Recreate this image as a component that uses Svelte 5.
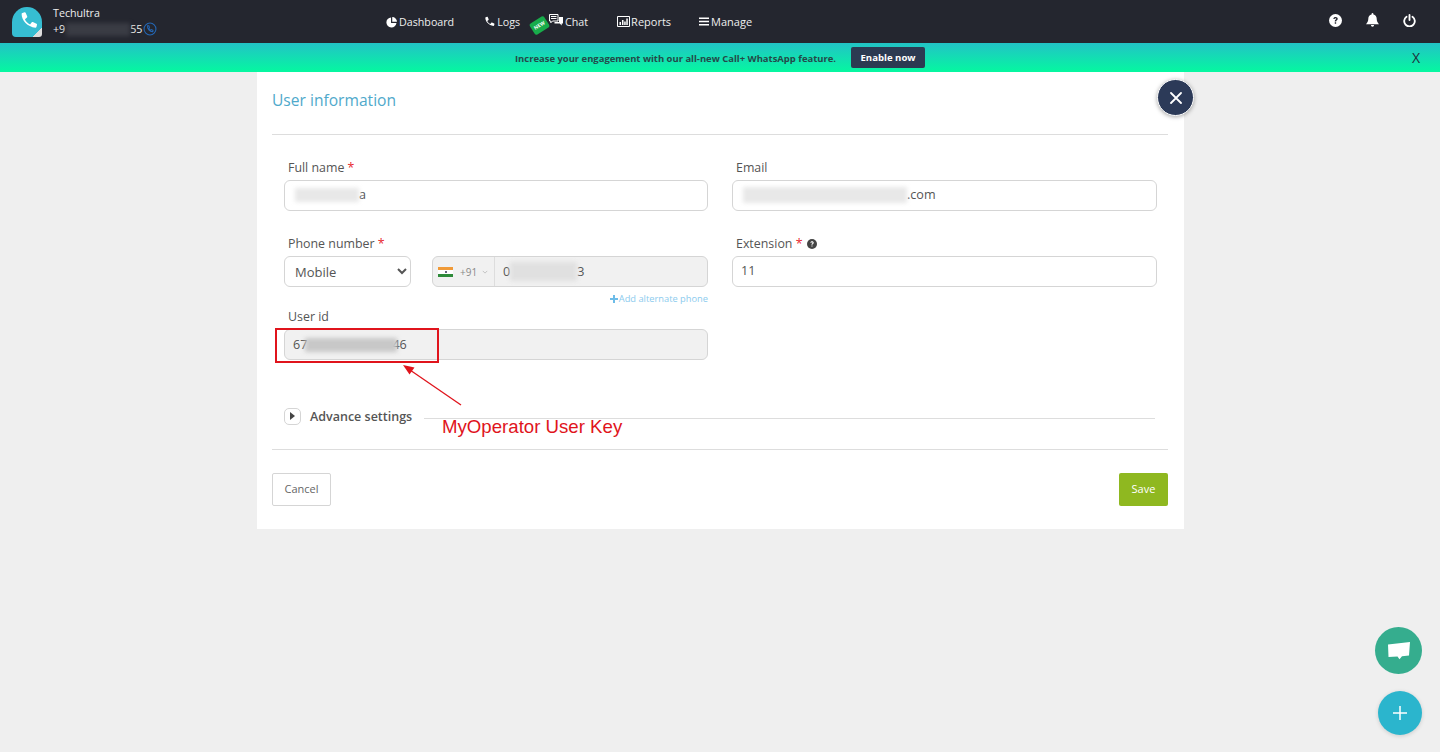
<script lang="ts">
	const navItems = [
		{ label: 'Dashboard', icon: 'pie' },
		{ label: 'Logs', icon: 'phone' },
		{ label: 'Chat', icon: 'chat' },
		{ label: 'Reports', icon: 'chart' },
		{ label: 'Manage', icon: 'bars' }
	];
	const phonePath =
		'M5.2 1.6 7 1.1c.4-.1.7.1.9.4l1.3 3c.1.3 0 .7-.2.9L7.3 6.8c.8 1.9 2.3 3.4 4.2 4.2l1.4-1.7c.2-.3.6-.3.9-.2l3 1.3c.3.2.5.5.4.9l-.5 1.8c-.1.4-.4.6-.8.6C9.400 12.700 4.600 7.900 4.600 2.400c0-.4.2-.7.6-.8z';
</script>

<header class="topbar">
	<div class="account">
		<span class="logo">
			<svg viewBox="0 0 18 18" width="22" height="22"><path d={phonePath} fill="#fff" /></svg>
		</span>
		<div class="account-text">
			<span>Techultra</span>
			<span class="account-number">
				+9<i class="redact dark"></i>55
				<svg viewBox="0 0 16 16" width="14" height="14" fill="none" stroke="#2467b5" stroke-width="1.2">
					<circle cx="8" cy="8" r="6.8" />
					<path d="M5.200 4.200c-.6 3.300 2.600 7 6 6.800l.2-1.500-2-.8-.9.9c-.9-.4-1.600-1.200-2-2.100l.9-.9-.7-2.400z" />
				</svg>
			</span>
		</div>
	</div>

	<nav class="nav">
		{#each navItems as item}
			<a class="nav-item" class:chat={item.icon === 'chat'} href="#top">
				{#if item.icon === 'pie'}
					<svg viewBox="0 0 12 12" width="11" height="11"><path d="M5.500.500v6h5.900A5.500 5.500 0 1 1 5.500.500zM6.800 0A5.300 5.300 0 0 1 12 5.200H6.800z" fill="#fff" /></svg>
				{:else if item.icon === 'phone'}
					<svg viewBox="0 0 18 18" width="13" height="13"><path d={phonePath} fill="#fff" /></svg>
				{:else if item.icon === 'chat'}
					<span class="new-tag">NEW</span>
					<svg class="chat-icon" viewBox="0 0 14 13" width="14" height="13">
						<path d="M.500.500h8.500v6.500H3.500L1.800 8.800V7H.500z" fill="#24262f" stroke="#fff" />
						<path d="M2 2.500h5.500M2 4.500h5.500" stroke="#fff" />
						<path d="M10 3h4v6.500h-1.300v2L10.800 9.500H5.500V8H10z" fill="#fff" />
					</svg>
				{:else if item.icon === 'chart'}
					<svg viewBox="0 0 13 11" width="13" height="11">
						<path d="M.500.500h12v10H.500z" fill="none" stroke="#fff" />
						<path d="M2.500 6h1.500v3H2.500zM5 4h1.500v5H5zM7.200 5.500h1.500V9H7.200zM9.300 2.500h1.500V9H9.300z" fill="#fff" />
					</svg>
				{:else}
					<svg viewBox="0 0 10 9" width="10" height="9"><path d="M0 .500h10v1.400H0zM0 3.800h10v1.400H0zM0 7.100h10v1.400H0z" fill="#fff" /></svg>
				{/if}
				{item.label}
			</a>
		{/each}
	</nav>

	<div class="top-actions">
		<svg viewBox="0 0 14 14" width="13" height="13">
			<circle cx="7" cy="7" r="7" fill="#fff" />
			<path d="M4.700 5.300C4.800 3.900 5.800 3.200 7.100 3.200c1.300 0 2.300.8 2.300 2 0 1.700-1.700 1.600-1.700 2.900H6.200c0-2 1.600-2 1.600-2.900 0-.4-.3-.7-.8-.7-.6 0-.9.400-1 .8zM6.200 9h1.500v1.500H6.200z" fill="#24262f" />
		</svg>
		<svg viewBox="0 0 14 15" width="13" height="14"><path d="M7 0c.6 0 1 .4 1 1v.5c2.300.4 3.500 2.300 3.500 4.500 0 3 1 4.500 2.500 6H0c1.500-1.500 2.500-3 2.500-6 0-2.200 1.200-4.100 3.500-4.500V1c0-.6.400-1 1-1zM5.300 13h3.400a1.700 1.700 0 0 1-3.400 0z" fill="#fff" /></svg>
		<svg viewBox="0 0 14 14" width="13" height="13" fill="none" stroke="#fff" stroke-width="2" stroke-linecap="round">
			<path d="M7 1v5.500" />
			<path d="M3.800 3A5.700 5.700 0 1 0 10.200 3" />
		</svg>
	</div>
</header>

<div class="banner">
	<div class="banner-center">
		<strong>Increase your engagement with our all-new Call+ WhatsApp feature.</strong>
		<button class="enable">Enable now</button>
	</div>
	<span class="banner-close">X</span>
</div>

<main class="page">
	<section class="card">
		<button class="close-round" aria-label="Close">
			<svg viewBox="0 0 12 12" width="12" height="12" stroke="#fff" stroke-width="1.800" stroke-linecap="round"><path d="M1 1l10 10M11 1 1 11" /></svg>
		</button>

		<h1>User information</h1>

		<div class="form">
			<div class="form-col">
				<label for="name">Full name <b>*</b></label>
				<div class="field" id="name"><i class="redact name-blur"></i>a</div>
			</div>
			<div class="form-col">
				<label for="email">Email</label>
				<div class="field" id="email"><i class="redact email-blur"></i>.com</div>
			</div>

			<div class="form-col">
				<label for="phone">Phone number <b>*</b></label>
				<div class="phone-row">
					<select class="field type-select">
						<option>Mobile</option>
					</select>
					<div class="field phone-field" id="phone">
						<span class="dial">
							<span class="flag"><i></i></span>
							+91
							<svg viewBox="0 0 8 5" width="6" height="4" fill="none" stroke="#b4b4b4"><path d="m1 1 3 3 3-3" /></svg>
						</span>
						<span class="phone-number">0<i class="redact phone-blur"></i>3</span>
					</div>
				</div>
				<div class="alt-phone">
					<svg viewBox="0 0 8 8" width="8" height="8"><path d="M3 0h2v3h3v2H5v3H3V5H0V3h3z" fill="#6dbce8" /></svg>
					Add alternate phone
				</div>
			</div>
			<div class="form-col">
				<label for="ext">Extension <b>*</b>
					<svg class="hint" viewBox="0 0 14 14" width="10" height="10">
						<circle cx="7" cy="7" r="7" fill="#444" />
						<path d="M4.700 5.300C4.800 3.900 5.800 3.200 7.100 3.200c1.300 0 2.300.8 2.300 2 0 1.700-1.700 1.600-1.700 2.900H6.200c0-2 1.600-2 1.600-2.900 0-.4-.3-.7-.8-.7-.6 0-.9.400-1 .8zM6.200 9h1.500v1.500H6.200z" fill="#fff" />
					</svg>
				</label>
				<div class="field ext-field" id="ext">11</div>
			</div>

			<div class="form-col user-id">
				<label for="uid">User id</label>
				<div class="field disabled" id="uid">67<i class="redact uid-blur"></i>46</div>
				<div class="red-box"></div>
			</div>
		</div>

		<div class="advanced">
			<span class="toggle"><svg viewBox="0 0 5 8" width="5" height="8"><path d="M0 0l5 4-5 4z" fill="#444" /></svg></span>
			<strong>Advance settings</strong>
			<span class="advanced-line"></span>
			<svg class="arrow" viewBox="0 0 62 44" width="62" height="44">
				<path d="M59 40 8 5" stroke="#e0141c" stroke-width="1.300" fill="none" />
				<path d="M1 0l11.500 2.500-5 7z" fill="#e0141c" />
			</svg>
			<span class="annotation">MyOperator User Key</span>
		</div>

		<footer class="actions">
			<button class="cancel">Cancel</button>
			<button class="save">Save</button>
		</footer>
	</section>
</main>

<button class="fab chat-fab" aria-label="Chat">
	<svg viewBox="0 0 24 20" width="24" height="20"><path d="M1 3.500 23 1l-1 13.500-7 .8-2.500 3-2-2.700-9 .4z" fill="#fff" /></svg>
</button>
<button class="fab add-fab" aria-label="Add">
	<svg viewBox="0 0 14 14" width="14" height="14" stroke="#fff" stroke-width="1.500"><path d="M7 0v14M0 7h14" /></svg>
</button>

<style>
	:global(body) {
		background: #efefef;
		font-family: 'Open Sans', sans-serif;
		color: #555;
		height: 752px;
		overflow: hidden;
	}

	.topbar {
		height: 43px;
		display: flex;
		align-items: center;
		background: #24262f;
		color: #eee;
		font-size: 10.7px;
		position: relative;
	}

	.account {
		display: flex;
		align-items: center;
		gap: 11px;
		padding-left: 12px;
	}

	.logo {
		width: 30px;
		height: 30px;
		display: flex;
		align-items: center;
		justify-content: center;
		background: linear-gradient(135deg, #36bdd2 85%, #ddd 85%);
		border-radius: 50% 50% 3px 4px;
		margin-top: 1px;
	}

	.account-text {
		display: flex;
		flex-direction: column;
		line-height: 16px;
		margin-top: -1px;
	}

	.account-number {
		display: flex;
		align-items: center;
	}

	.account-number svg {
		margin-left: 1px;
	}

	.redact {
		display: inline-block;
		filter: blur(2px);
	}

	.redact.dark {
		width: 64px;
		height: 13px;
		background: #3a3c44;
		margin-left: 1px;
	}

	.nav {
		position: absolute;
		left: 386px;
		top: 0;
		height: 44px;
		display: flex;
		align-items: center;
	}

	.nav-item {
		display: flex;
		align-items: center;
		gap: 2px;
		color: #eee;
		text-decoration: none;
		margin-right: 28px;
		position: relative;
	}

	.nav-item:nth-child(2),
	.nav-item:nth-child(3) {
		margin-right: 29px;
	}

	.nav-item:nth-child(4) {
		gap: 1px;
		font-size: 11px;
		margin-top: -1px;
	}

	.nav-item:nth-child(5) {
		font-size: 11px;
		margin-top: -1px;
	}

	.chat-icon {
		margin-top: -3px;
	}

	.new-tag {
		position: absolute;
		left: -18px;
		top: 4px;
		width: 17px;
		height: 13px;
		background: #18ac4b;
		border-radius: 2px;
		color: #fff;
		font-size: 5px;
		font-weight: 700;
		line-height: 13px;
		text-align: center;
		transform: rotate(-32deg);
	}

	.top-actions {
		margin-left: auto;
		display: flex;
		align-items: center;
		gap: 24px;
		padding-right: 24px;
		margin-top: -3px;
	}

	.banner {
		height: 29px;
		background: linear-gradient(180deg, #22c3c6 0%, #05f8a0 100%);
		display: flex;
		align-items: center;
		justify-content: center;
		position: relative;
		color: #24494a;
		font-size: 9.45px;
	}

	.banner-center {
		display: flex;
		align-items: center;
		gap: 15px;
	}

	.banner-center strong {
		font-weight: 700;
		margin-top: 1px;
	}

	.enable {
		width: 74px;
		height: 21px;
		padding: 0;
		border: none;
		border-radius: 2px;
		background: #2c3a52;
		color: #fff;
		font: 700 9.6px 'Open Sans', sans-serif;
	}

	.banner-close {
		position: absolute;
		right: 20px;
		top: 5px;
		color: #1f2e3a;
		font-size: 14px;
	}

	.page {
		display: flex;
		justify-content: center;
		padding-left: 1px;
	}

	.card {
		position: relative;
		width: 896px;
		height: 457px;
		padding: 0 16px 0 15px;
		background: #fff;
	}

	.close-round {
		position: absolute;
		right: -10px;
		top: 7px;
		width: 37px;
		height: 37px;
		padding: 0;
		display: flex;
		align-items: center;
		justify-content: center;
		border: 1px solid #fff;
		border-radius: 50%;
		background: #2c3a58;
		box-shadow: 0 1px 4px rgba(0, 0, 0, 0.35);
	}

	h1 {
		margin: 0;
		height: 62px;
		line-height: 56px;
		border-bottom: 1px solid #ddd;
		color: #4fa9cb;
		font-size: 15.6px;
		font-weight: 400;
	}

	.form {
		display: grid;
		grid-template-columns: 424px 425px;
		column-gap: 24px;
		padding: 22px 12px 0;
	}

	.form-col {
		min-height: 76px;
		position: relative;
	}

	.form-col label {
		display: block;
		height: 23px;
		padding-left: 4px;
		line-height: 22px;
		font-size: 12.4px;
		color: #555;
	}

	label b {
		color: #e8282e;
		font-weight: 400;
	}

	.hint {
		vertical-align: -1px;
		margin-left: 1px;
	}

	.field {
		box-sizing: border-box;
		height: 31px;
		display: flex;
		align-items: center;
		padding: 0 10px 2px;
		border: 1px solid #d5d5d5;
		border-radius: 6px;
		background: #fff;
		color: #555;
		font: 12.6px 'Open Sans', sans-serif;
	}

	.ext-field {
		padding-left: 8px;
	}

	.name-blur {
		width: 64px;
		height: 14px;
		background: #e8e8e8;
	}

	.email-blur {
		width: 164px;
		height: 16px;
		background: #e8e8e8;
	}

	.phone-row {
		display: flex;
		gap: 21px;
	}

	.type-select {
		width: 127px;
		padding: 0 6px;
		flex: none;
		font-size: 13px;
	}

	.phone-field {
		flex: 1;
		padding: 0;
		background: #f1f1f1;
	}

	.dial {
		width: 62px;
		height: 100%;
		display: flex;
		align-items: center;
		gap: 5px;
		padding-left: 5px;
		box-sizing: border-box;
		border-right: 1px solid #ddd;
		color: #8a8a8a;
		font-size: 10px;
	}

	.flag {
		width: 15px;
		height: 10px;
		margin-right: 2px;
		background: linear-gradient(#f09a38 0 33%, #fff 33% 66%, #2e8b3a 66%);
		display: flex;
		align-items: center;
		justify-content: center;
	}

	.flag i {
		width: 2px;
		height: 2px;
		background: #335;
		border-radius: 50%;
	}

	.phone-number {
		display: flex;
		align-items: center;
		padding-left: 8px;
	}

	.phone-blur {
		width: 67px;
		height: 19px;
		background: #e0e0e0;
	}

	.alt-phone {
		margin-top: 5px;
		display: flex;
		align-items: center;
		justify-content: flex-end;
		gap: 1px;
		color: #8ccbee;
		font-size: 9.3px;
		line-height: 14px;
	}

	.user-id {
		margin-top: -3px;
	}

	.disabled {
		background: #f1f1f1;
		padding: 0 8px;
	}

	.uid-blur {
		position: relative;
		z-index: 1;
		width: 92px;
		height: 14px;
		background: #c8c8c8;
		margin: 0 -5px 0 -2px;
	}

	.red-box {
		position: absolute;
		left: -9px;
		top: 22px;
		width: 160px;
		height: 31px;
		border: 2px solid #e0141c;
	}

	.advanced {
		position: relative;
		display: flex;
		align-items: center;
		height: 20px;
		margin-top: 24px;
		padding-left: 12px;
		color: #555;
		font-size: 12.5px;
	}

	.advanced strong {
		font-weight: 600;
	}

	.toggle {
		width: 17px;
		height: 17px;
		display: flex;
		align-items: center;
		justify-content: center;
		box-sizing: border-box;
		border: 1px solid #d5d5d5;
		border-radius: 5px;
		margin-right: 9px;
	}

	.advanced-line {
		flex: 1;
		height: 1px;
		background: #ddd;
		margin: 4px 13px 0 12px;
	}

	.arrow {
		position: absolute;
		left: 130px;
		top: -41px;
	}

	.annotation {
		position: absolute;
		left: 170px;
		top: 9px;
		color: #e0141c;
		font-family: 'Liberation Sans', sans-serif;
		font-size: 18.65px;
		line-height: 24px;
		white-space: nowrap;
	}

	.actions {
		display: flex;
		justify-content: space-between;
		align-items: flex-start;
		margin-top: 23px;
		padding-top: 23px;
		border-top: 1px solid #ddd;
	}

	.cancel,
	.save {
		height: 33px;
		padding: 0 0 2px;
		border-radius: 2px;
		font: 11px 'Open Sans', sans-serif;
	}

	.cancel {
		width: 59px;
		border: 1px solid #d5d5d5;
		background: #fff;
		color: #666;
	}

	.save {
		width: 49px;
		border: none;
		background: #8fb820;
		color: #fff;
	}

	.fab {
		position: fixed;
		display: flex;
		align-items: center;
		justify-content: center;
		padding: 0;
		border: none;
		border-radius: 50%;
	}

	.chat-fab {
		left: 1375px;
		top: 627px;
		width: 47px;
		height: 47px;
		background: #35ad8e;
	}

	.add-fab {
		left: 1378px;
		top: 691px;
		width: 44px;
		height: 44px;
		background: #2bb5cd;
		box-shadow: 0 1px 4px rgba(0, 0, 0, 0.15);
	}
</style>
